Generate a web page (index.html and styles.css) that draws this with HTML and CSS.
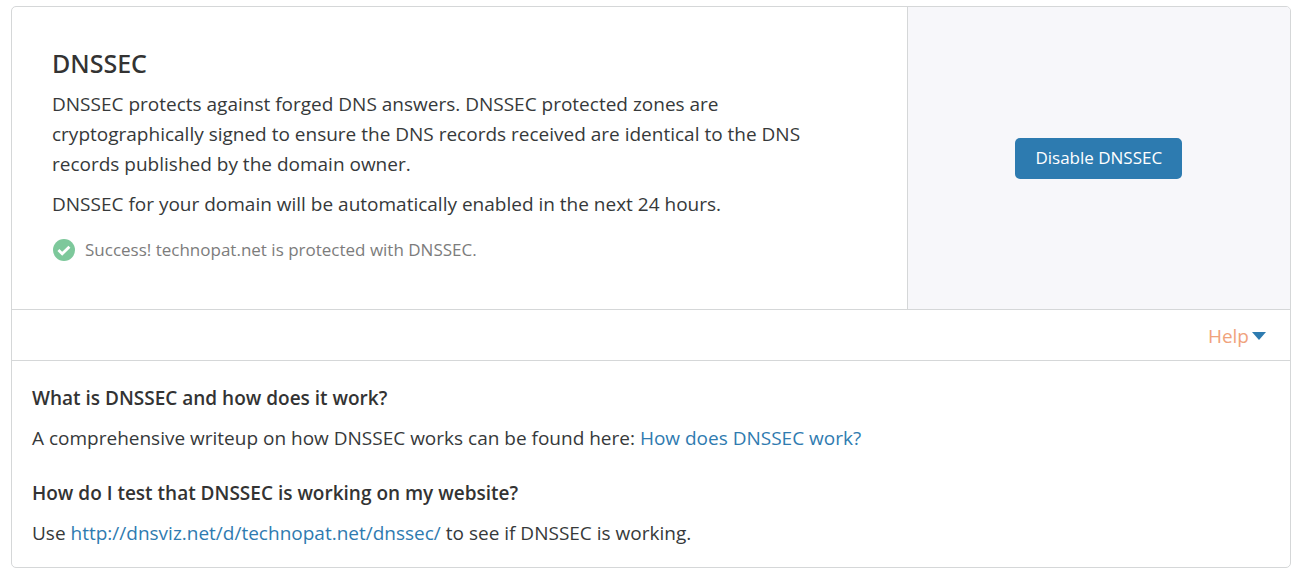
FILE: index.html
```html
<!DOCTYPE html>
<html lang="en">
<head>
<meta charset="utf-8">
<title>DNSSEC</title>
<link rel="stylesheet" href="styles.css">
</head>
<body>
<main class="card">
  <section class="summary">
    <div class="content">
      <h1 class="title">DNSSEC</h1>
      <p class="text">DNSSEC protects against forged DNS answers. DNSSEC protected zones are cryptographically signed to ensure the DNS records received are identical to the DNS records published by the domain owner.</p>
      <p class="text">DNSSEC for your domain will be automatically enabled in the next 24 hours.</p>
      <p class="status">
        <svg class="status-icon" viewBox="0 0 24 22" aria-hidden="true"><circle cx="12" cy="11" r="11" fill="#7dc89b"/><path d="M6.4 11l3.8 3.7 7.2-7" fill="none" stroke="#fff" stroke-width="2.8"/></svg>
        <span>Success! technopat.net is protected with DNSSEC.</span>
      </p>
    </div>
    <div class="control">
      <button class="button" type="button">Disable DNSSEC</button>
    </div>
  </section>
  <div class="help-bar">
    <button class="help-toggle" type="button" aria-expanded="true">Help<svg class="caret" viewBox="0 0 14 8" aria-hidden="true"><path d="M0 0h14L7 8z" fill="#2d7bb0"/></svg></button>
  </div>
  <section class="help">
    <h2 class="question">What is DNSSEC and how does it work?</h2>
    <p class="answer">A comprehensive writeup on how DNSSEC works can be found here: <a class="link" href="#how">How does DNSSEC work?</a></p>
    <h2 class="question">How do I test that DNSSEC is working on my website?</h2>
    <p class="answer">Use <a class="link" href="http://dnsviz.net/d/technopat.net/dnssec/">http://dnsviz.net/d/technopat.net/dnssec/</a> to see if DNSSEC is working.</p>
  </section>
</main>
</body>
</html>
```
FILE: styles.css
```css
* { box-sizing: border-box; }
body {
  margin: 0;
  padding: 6px 11px 5px;
  background: #fff;
  color: #36393a;
  font: 19px/30px "Segoe UI", "Open Sans", "Noto Sans", sans-serif;
}
h1, h2, p { margin: 0; }
.card { border: 1px solid #d5d7d8; border-radius: 5px; overflow: hidden; }
.summary { display: grid; grid-template-columns: 7fr 3fr; }
.content { padding: 40px 40px 44px; }
.title { font-family: "Segoe UI", "Noto Sans", sans-serif; font-size: 25px; line-height: 32px; font-weight: 500; margin-bottom: 10px; color: #333; }
.text { margin-bottom: 10px; max-width: 770px; }
.status { display: flex; align-items: center; gap: 9px; margin-top: 16px; font-size: 17px; color: #7c7c7c; }
.status-icon { width: 24px; height: 22px; }
.control { display: flex; align-items: center; justify-content: center; background: #f7f7fa; border-left: 1px solid #d5d7d8; }
.button { height: 41px; padding: 0 20px; border: 0; border-radius: 5px; background: #2d7bb0; color: #fff; font: inherit; font-size: 17px; }
.help-bar { display: flex; justify-content: flex-end; padding: 11px 24px 9px; border: solid #d5d7d8; border-width: 1px 0; }
.help-toggle { display: flex; align-items: center; gap: 3px; padding: 0; border: 0; background: none; color: #f0a27c; font: inherit; }
.caret { width: 14px; height: 8px; }
.help { padding: 22px 20px 19px; }
.question { font-size: 19px; line-height: 30px; font-weight: 600; margin-bottom: 10px; color: #333; }
.answer + .question { margin-top: 25px; }
.link { color: #2f7bb0; text-decoration: none; }
```
